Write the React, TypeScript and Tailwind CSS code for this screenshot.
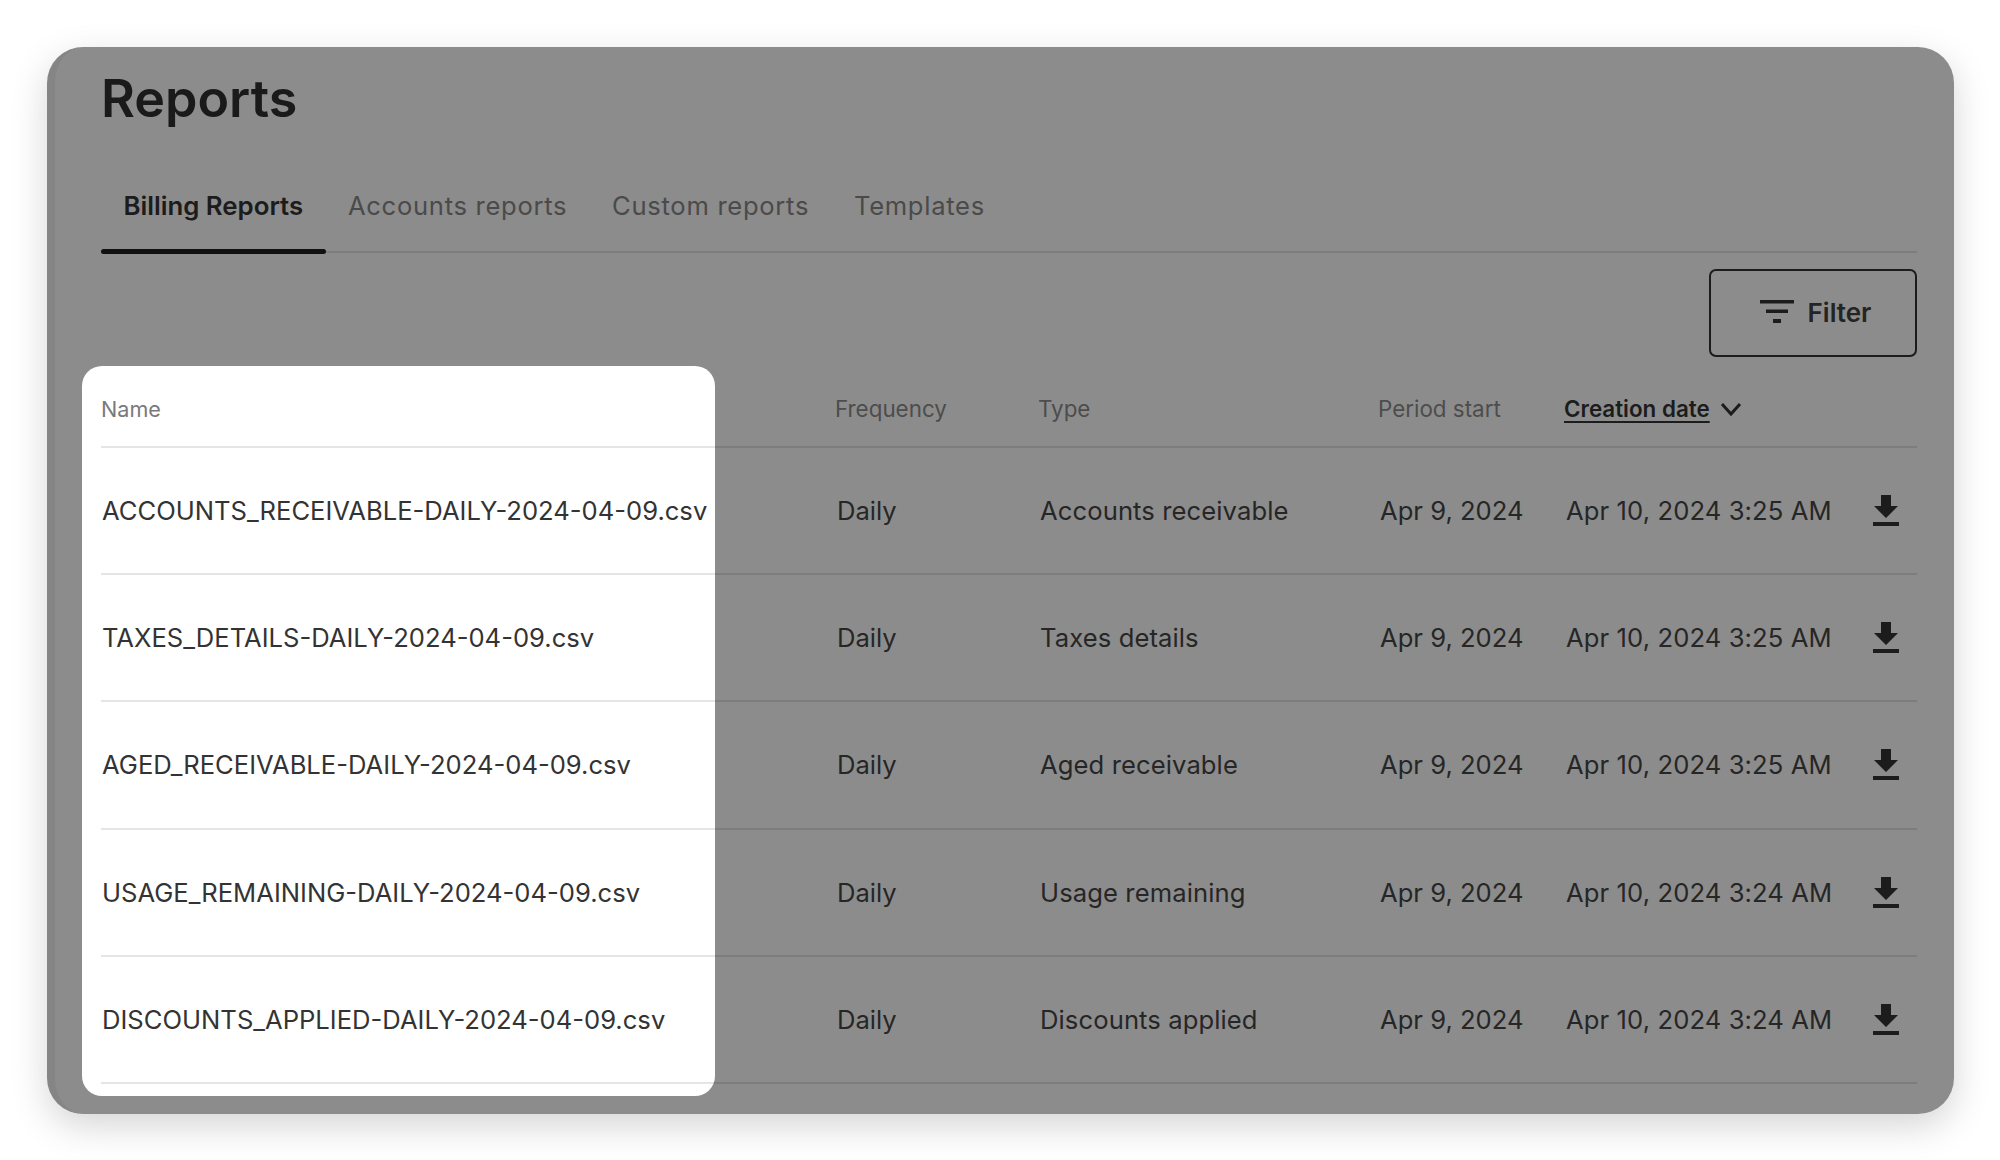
const rows = [
  { name: "ACCOUNTS_RECEIVABLE-DAILY-2024-04-09.csv", type: "Accounts receivable", created: "Apr 10, 2024 3:25 AM" },
  { name: "TAXES_DETAILS-DAILY-2024-04-09.csv", type: "Taxes details", created: "Apr 10, 2024 3:25 AM" },
  { name: "AGED_RECEIVABLE-DAILY-2024-04-09.csv", type: "Aged receivable", created: "Apr 10, 2024 3:25 AM" },
  { name: "USAGE_REMAINING-DAILY-2024-04-09.csv", type: "Usage remaining", created: "Apr 10, 2024 3:24 AM" },
  { name: "DISCOUNTS_APPLIED-DAILY-2024-04-09.csv", type: "Discounts applied", created: "Apr 10, 2024 3:24 AM" },
];

const tabs = ["Billing Reports", "Accounts reports", "Custom reports", "Templates"];
const cols = "grid grid-cols-[734px_203px_340px_186px_286px_67px] items-center";

function DownloadIcon() {
  return (
    <svg width="26" height="32" viewBox="0 0 26 32" fill="#1c1c1c" aria-hidden="true">
      <path d="M8 0h10v11h7L13 23 1 11h7z" />
      <rect x="0" y="27" width="26" height="4" />
    </svg>
  );
}

function FilterIcon() {
  return (
    <svg width="34" height="24" viewBox="0 0 34 24" fill="#1c1c1c" aria-hidden="true">
      <rect x="0" y="0" width="34" height="3.5" />
      <rect x="6" y="9.5" width="22" height="3.5" />
      <rect x="13" y="19" width="8" height="4" />
    </svg>
  );
}

export default function App() {
  return (
    <div className="w-[2000px] h-[1160px] bg-white pl-[47px] pt-[47px] font-['Inter',sans-serif] overflow-hidden">
      <div className="relative w-[1907px] h-[1067px] bg-[#8c8c8c] rounded-[36px] border-l-[8px] border-[#858585] shadow-[0_12px_36px_rgba(0,0,0,0.17)] pl-[46px] pr-[37px] pt-[20px]">
        <h1 className="text-[52px] leading-[64px] font-semibold text-[#1a1a1a]">Reports</h1>

        <div className="flex mt-[26px] h-[96px] border-b-2 border-black/10">
          {tabs.map((t, i) => (
            <div
              key={t}
              className={
                i === 0
                  ? "relative flex items-center px-[22.4px] pt-[4px] text-[25.8px] font-semibold text-[#1c1c1c]"
                  : "flex items-center px-[22.4px] pt-[4px] text-[25.6px] text-[#4a4a4a] tracking-[0.7px]"
              }
            >
              {t}
              {i === 0 && <span className="absolute inset-x-0 bottom-[-3px] h-[5px] rounded-full bg-[#111]" />}
            </div>
          ))}
        </div>

        <div className="flex justify-end mt-[16px]">
          <button className="w-[208px] h-[88px] flex items-center justify-center gap-[14px] pl-[5px] pb-[2px] border-2 border-[#1c1c1c] rounded-[7px] text-[26px] font-semibold text-[#242424]">
            <FilterIcon />
            Filter
          </button>
        </div>

        <div className="relative">
          <div className="absolute left-[-19px] top-[9px] w-[633px] h-[730px] bg-white rounded-[20px]" />
          <div className="relative">
            <div className={`${cols} h-[90.5px] pt-[16px] border-b-2 border-black/10 text-[22.4px] text-[#4d4d4d]`}>
              <div className="text-[21.6px] text-[#7a7a7a]">Name</div>
              <div>Frequency</div>
              <div>Type</div>
              <div>Period start</div>
              <div className="flex items-center gap-[9px] font-semibold text-[#1c1c1c]">
                <span className="underline underline-offset-4">Creation date</span>
                <svg width="24" height="24" viewBox="0 0 24 24" fill="none" stroke="#1c1c1c" strokeWidth="3" aria-hidden="true">
                  <path d="m3 7 9 10 9-10" />
                </svg>
              </div>
              <div />
            </div>
            {rows.map((r) => (
              <div key={r.name} className={`${cols} h-[127.4px] border-b-2 border-black/10 text-[25.6px] pl-[2px] pt-[1px] text-[#262626]`}>
                <div className="-ml-[1px] text-[#333]">{r.name}</div>
                <div>Daily</div>
                <div className="tracking-[0.1px]">{r.type}</div>
                <div>Apr 9, 2024</div>
                <div className="tracking-[0.1px]">{r.created}</div>
                <div className="flex justify-center"><DownloadIcon /></div>
              </div>
            ))}
          </div>
        </div>
      </div>
    </div>
  );
}
